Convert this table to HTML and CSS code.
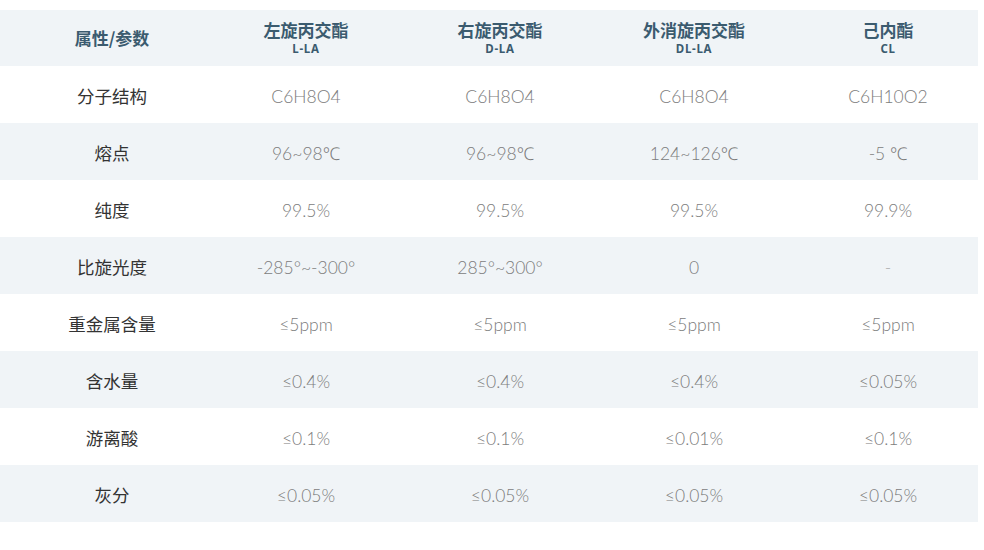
FILE: index.html
```html
<!DOCTYPE html>
<html lang="zh">
<head>
<meta charset="utf-8">
<link rel="stylesheet" href="styles.css">
</head>
<body>
<div class="table">
  <div class="row head">
    <div class="cell"><span class="h-main">属性/参数</span></div>
    <div class="cell"><span class="h-main">左旋丙交酯</span><span class="h-sub">L-LA</span></div>
    <div class="cell"><span class="h-main">右旋丙交酯</span><span class="h-sub">D-LA</span></div>
    <div class="cell"><span class="h-main">外消旋丙交酯</span><span class="h-sub">DL-LA</span></div>
    <div class="cell"><span class="h-main">己内酯</span><span class="h-sub">CL</span></div>
  </div>
  <div class="row">
    <div class="cell label">分子结构</div>
    <div class="cell val">C6H8O4</div>
    <div class="cell val">C6H8O4</div>
    <div class="cell val">C6H8O4</div>
    <div class="cell val">C6H10O2</div>
  </div>
  <div class="row alt">
    <div class="cell label">熔点</div>
    <div class="cell val">96~98℃</div>
    <div class="cell val">96~98℃</div>
    <div class="cell val">124~126℃</div>
    <div class="cell val">-5 ℃</div>
  </div>
  <div class="row">
    <div class="cell label">纯度</div>
    <div class="cell val">99.5%</div>
    <div class="cell val">99.5%</div>
    <div class="cell val">99.5%</div>
    <div class="cell val">99.9%</div>
  </div>
  <div class="row alt">
    <div class="cell label">比旋光度</div>
    <div class="cell val">-285°~-300°</div>
    <div class="cell val">285°~300°</div>
    <div class="cell val">0</div>
    <div class="cell val dash">-</div>
  </div>
  <div class="row">
    <div class="cell label">重金属含量</div>
    <div class="cell val">≤5ppm</div>
    <div class="cell val">≤5ppm</div>
    <div class="cell val">≤5ppm</div>
    <div class="cell val">≤5ppm</div>
  </div>
  <div class="row alt">
    <div class="cell label">含水量</div>
    <div class="cell val">≤0.4%</div>
    <div class="cell val">≤0.4%</div>
    <div class="cell val">≤0.4%</div>
    <div class="cell val">≤0.05%</div>
  </div>
  <div class="row">
    <div class="cell label">游离酸</div>
    <div class="cell val">≤0.1%</div>
    <div class="cell val">≤0.1%</div>
    <div class="cell val">≤0.01%</div>
    <div class="cell val">≤0.1%</div>
  </div>
  <div class="row alt">
    <div class="cell label">灰分</div>
    <div class="cell val">≤0.05%</div>
    <div class="cell val">≤0.05%</div>
    <div class="cell val">≤0.05%</div>
    <div class="cell val">≤0.05%</div>
  </div>
</div>
</body>
</html>
```

FILE: styles.css
```css
html, body {
  margin: 0;
  padding: 0;
  background: #ffffff;
}
body {
  font-family: "Noto Sans CJK SC", "Noto Sans", sans-serif;
  padding-top: 10px;
}
.table {
  width: 978px;
}
.row {
  display: grid;
  grid-template-columns: repeat(5, 194px);
  padding-left: 15px;
  height: 57px;
  box-sizing: border-box;
  align-items: center;
}
.row.head {
  height: 56px;
  background: #f0f4f7;
}
.row.alt {
  background: #f0f4f7;
}
.cell {
  display: flex;
  flex-direction: column;
  align-items: center;
  justify-content: center;
  text-align: center;
}
.h-main {
  display: block;
  font-size: 17px;
  font-weight: 700;
  color: #3b5b6f;
  line-height: 18px;
}
.h-sub {
  display: block;
  font-family: "Noto Sans", sans-serif;
  font-size: 11.5px;
  font-weight: 700;
  color: #3b5b6f;
  letter-spacing: 0.7px;
  line-height: 12px;
  margin-top: 4px;
}
.label {
  font-size: 17.5px;
  font-weight: 400;
  color: #333333;
  padding-top: 2px;
}
.val {
  font-family: "Lato", "Noto Sans", sans-serif;
  font-weight: 300;
  font-size: 17.5px;
  color: #7c7c7c;
  padding-top: 3px;
}
.dash {
  color: #a8a8a8;
}
```
